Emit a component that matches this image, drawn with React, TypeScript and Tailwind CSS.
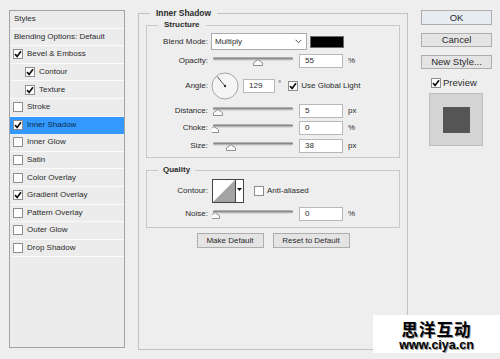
import clsx from 'clsx';
import type { ReactNode } from 'react';

const FONT = "font-['Liberation_Sans',Arial,sans-serif]";

const styleRows = [
  { label: 'Bevel & Emboss', on: true },
  { label: 'Contour', on: true, indent: true },
  { label: 'Texture', on: true, indent: true },
  { label: 'Stroke' },
  { label: 'Inner Shadow', on: true, active: true },
  { label: 'Inner Glow' },
  { label: 'Satin' },
  { label: 'Color Overlay' },
  { label: 'Gradient Overlay', on: true },
  { label: 'Pattern Overlay' },
  { label: 'Outer Glow' },
  { label: 'Drop Shadow' },
];

function Box({ on, className }: { on?: boolean; className?: string }) {
  return (
    <span
      className={clsx(
        'flex h-[10px] w-[10px] shrink-0 items-center justify-center border border-[#8e8e8e] bg-white',
        className,
      )}
    >
      {on && (
        <svg width="8" height="8" viewBox="0 0 8 8">
          <path d="M1 4.2 L3.1 6.4 L7 1.2" fill="none" stroke="#111" strokeWidth="1.7" />
        </svg>
      )}
    </span>
  );
}

function Label({ children }: { children: ReactNode }) {
  return <span className="w-[61px] shrink-0 text-right">{children}</span>;
}

function Slider({ pos }: { pos: number }) {
  return (
    <svg width="82" height="16" viewBox="0 0 82 16" className="ml-[4px] shrink-0">
      <rect x="1" y="4.5" width="80" height="3" rx="1.5" fill="#c4c4c4" />
      <rect x="1" y="4.5" width="80" height="1.8" rx="0.9" fill="#8a8a8a" />
      <path
        d={`M${pos - 4.5} 12.5 V9.8 L${pos} 6.6 L${pos + 4.5} 9.8 V12.5 Z`}
        fill="#fbfbfb"
        stroke="#777"
        strokeWidth="0.8"
      />
    </svg>
  );
}

function Num({ v, className }: { v: string; className?: string }) {
  return (
    <span
      className={clsx(
        'flex h-[14px] shrink-0 items-center border border-[#b8b8b8] bg-white pl-[5px]',
        className ?? 'ml-[5px] w-[44px]',
      )}
    >
      {v}
    </span>
  );
}

function SliderRow({ label, pos, v, unit, h }: { label: string; pos: number; v: string; unit: string; h: string }) {
  return (
    <div className={clsx('flex items-center', h)}>
      <Label>{label}</Label>
      <Slider pos={pos} />
      <Num v={v} />
      <span className="ml-[5px]">{unit}</span>
    </div>
  );
}

function Btn({ children, className }: { children: ReactNode; className?: string }) {
  return (
    <span
      className={clsx(
        'flex shrink-0 items-center justify-center border border-[#adadad] bg-[#e4e4e4]',
        className,
      )}
    >
      {children}
    </span>
  );
}

export default function App() {
  return (
    <div
      className={clsx(
        'relative flex h-[359px] w-[500px] items-start overflow-hidden bg-[#eeeeee] pl-[9px] text-[8px] leading-none text-[#2b2b2b]',
        FONT,
      )}
    >
      {/* styles list */}
      <div className="mt-[10px] h-[338px] w-[116px] shrink-0 border border-[#a3a3a3] bg-[#ececec]">
        <div className="flex h-[17.6px] items-center border-b border-[#fafafa] pl-[4px]">Styles</div>
        <div className="flex h-[17.6px] items-center border-b border-[#fafafa] pl-[4px]">
          Blending Options: Default
        </div>
        {styleRows.map((r) => (
          <div
            key={r.label}
            className={clsx(
              'flex h-[17.6px] items-center gap-[4px] border-b',
              r.indent ? 'pl-[15px]' : 'pl-[3px]',
              r.active ? 'border-[#3399ff] bg-[#3399ff] text-[#0c2a4d]' : 'border-[#fafafa]',
            )}
          >
            <Box on={r.on} />
            <span>{r.label}</span>
          </div>
        ))}
      </div>

      {/* settings */}
      <fieldset className="ml-[13px] mt-[8px] h-[342px] w-[270px] shrink-0 border border-[#c2c2c2] px-[7px]">
        <legend className="ml-[4px] px-[6px] text-[8.4px] font-bold leading-[10px]">Inner Shadow</legend>

        <fieldset className="mt-[2px] border border-[#c8c8c8] pb-[3px]">
          <legend className="ml-[11px] px-[6px] font-bold leading-[10px]">Structure</legend>
          <div className="flex h-[23px] items-center">
            <Label>Blend Mode:</Label>
            <div className="ml-[3px] flex h-[17px] w-[96px] shrink-0 items-center justify-between border border-[#ababab] bg-white pl-[3px] pr-[4px]">
              <span>Multiply</span>
              <svg width="7" height="5" viewBox="0 0 7 5">
                <path d="M0.6 0.8 L3.5 3.8 L6.4 0.8" fill="none" stroke="#555" strokeWidth="1" />
              </svg>
            </div>
            <span className="ml-[3px] h-[12px] w-[34px] shrink-0 border border-[#6b6b6b] bg-black" />
          </div>
          <SliderRow label="Opacity:" pos={46} v="55" unit="%" h="h-[16px]" />
          <div className="flex h-[33px] items-center">
            <Label>Angle:</Label>
            <svg width="28" height="28" viewBox="0 0 28 28" className="ml-[3px] shrink-0">
              <circle cx="14" cy="14" r="13" fill="#f5f5f5" stroke="#9d9d9d" strokeWidth="0.9" />
              <line x1="14" y1="14" x2="6.3" y2="4.6" stroke="#3a3a3a" strokeWidth="0.9" />
              <circle cx="14" cy="14" r="1.2" fill="#333" />
            </svg>
            <Num v="129" className="ml-[4px] w-[32px]" />
            <span className="ml-[3px] self-start pt-[11px]">°</span>
            <Box on className="ml-[7px]" />
            <span className="ml-[3px]">Use Global Light</span>
          </div>
          <SliderRow label="Distance:" pos={6} v="5" unit="px" h="h-[17px]" />
          <SliderRow label="Choke:" pos={2} v="0" unit="%" h="h-[18px]" />
          <SliderRow label="Size:" pos={19} v="38" unit="px" h="h-[17px]" />
        </fieldset>

        <fieldset className="mt-[7px] border border-[#c8c8c8] pb-[5px] pt-[4px]">
          <legend className="ml-[11px] px-[5px] font-bold leading-[10px]">Quality</legend>
          <div className="flex h-[24px] items-center">
            <Label>Contour:</Label>
            <div className="ml-[4px] flex h-[24px] shrink-0 border border-[#444]">
              <svg width="22" height="22" viewBox="0 0 22 22" className="bg-white">
                <path d="M0 22 L22 0 L22 22 Z" fill="#a3a3a3" />
              </svg>
              <div className="flex w-[8px] justify-center border-l border-[#444] bg-white pt-[8px]">
                <svg width="5" height="3" viewBox="0 0 5 3">
                  <path d="M0 0 H5 L2.5 3 Z" fill="#111" />
                </svg>
              </div>
            </div>
            <Box className="ml-[10px]" />
            <span className="ml-[3px]">Anti-aliased</span>
          </div>
          <div className="mt-[3px]">
            <SliderRow label="Noise:" pos={3} v="0" unit="%" h="h-[16px]" />
          </div>
        </fieldset>

        <div className="mt-[5px] flex justify-center gap-[9px]">
          <Btn className="h-[15px] w-[67px]">Make Default</Btn>
          <Btn className="h-[15px] w-[77px]">Reset to Default</Btn>
        </div>
      </fieldset>

      {/* buttons */}
      <div className="ml-[13px] flex w-[71px] shrink-0 flex-col text-[9.5px]">
        <Btn className="mt-[10px] h-[15px] border-[#5a96cf] bg-[#e6ecf2]">OK</Btn>
        <Btn className="mt-[8px] h-[14px]">Cancel</Btn>
        <Btn className="mt-[8px] h-[14px]">New Style...</Btn>
        <div className="mt-[8px] flex h-[11px] items-center gap-[2px] pl-[10px]">
          <Box on />
          <span>Preview</span>
        </div>
        <div className="ml-[8px] mt-[5px] flex h-[53px] w-[54px] items-center justify-center border border-[#bdbdbd] bg-[#d4d4d4]">
          <span className="h-[26px] w-[27px] bg-[#555555]" />
        </div>
      </div>

      {/* watermark */}
      <div className="absolute left-[373px] top-[315px] flex h-[38px] w-[127px] flex-col items-center bg-white pt-[6px]">
        <span className="h-[17px] overflow-visible font-['Noto_Sans_CJK_SC',sans-serif] text-[16.5px] font-bold leading-[16px] tracking-[1px] text-black [text-shadow:1px_1px_0_#9a9a9a]">
          思洋互动
        </span>
        <span className="mt-[3px] text-[12.5px] font-bold leading-[9px] text-black [text-shadow:1px_1px_0_#9a9a9a]">
          www.ciya.cn
        </span>
      </div>
    </div>
  );
}
